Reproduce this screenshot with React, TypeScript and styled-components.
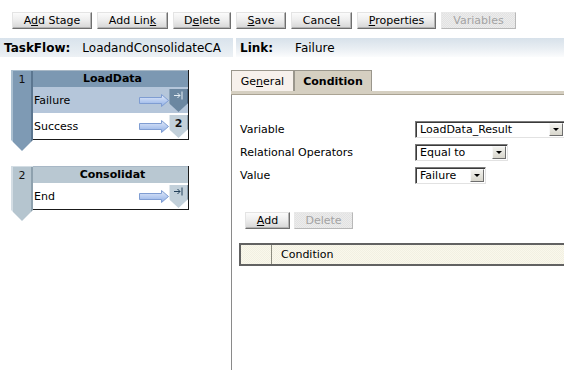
import React from "react";
import styled, { createGlobalStyle, css } from "styled-components";

const Global = createGlobalStyle`
  html, body { margin: 0; padding: 0; background: #ffffff; }
  body { font-family: "DejaVu Sans", Verdana, sans-serif; font-size: 11px; color: #000; }
  * { box-sizing: border-box; }
`;

const Page = styled.div`
  width: 564px;
  height: 370px;
  overflow: hidden;
  display: flex;
  flex-direction: column;
  background: #fff;
`;

const Toolbar = styled.div`
  display: flex;
  gap: 5px;
  padding: 12px 0 0 12px;
  height: 29px;
`;

const Btn = styled.button<{ $w: number; $disabled?: boolean }>`
  width: ${(p) => p.$w}px;
  height: 17px;
  padding: 0;
  margin: 0;
  font-family: "DejaVu Sans", Verdana, sans-serif;
  font-size: 11px;
  line-height: 14px;
  color: #000;
  background: linear-gradient(#fbfbfb, #eeeeee 45%, #d6d6d6);
  border: 1px solid;
  border-color: #e4e4e4 #6f6f6f #6f6f6f #e4e4e4;
  box-shadow: inset -1px -1px 0 #b4b4b4;
  ${(p) =>
    p.$disabled &&
    css`
      color: #a3a3a3;
      background: repeating-conic-gradient(#ececec 0 25%, #e2e2e2 0 50%) 0 0 / 2px 2px;
      border-color: #e8e8e8 #b8b8b8 #b8b8b8 #e8e8e8;
      box-shadow: none;
    `}
  u { text-decoration: underline; text-underline-offset: 1px; }
`;

const HeaderBar = styled.div`
  display: flex;
  gap: 3px;
  margin-top: 9px;
  height: 19px;
`;

const HeaderCell = styled.div<{ $w?: number; $fade?: boolean }>`
  ${(p) => (p.$w ? `width: ${p.$w}px; flex: none;` : "flex: 1;")}
  display: flex;
  align-items: center;
  padding-left: 4px;
  font-size: 12px;
  white-space: nowrap;
  overflow: hidden;
  background: ${(p) =>
    p.$fade
      ? "linear-gradient(#d7e1ea, #e9eef3 55%, #fbfcfd)"
      : "linear-gradient(#d9e3ec, #e4ebf1 60%, #edf1f5)"};
`;

const HeaderKey = styled.b<{ $gap: number }>`
  font-weight: bold;
  margin-right: ${(p) => p.$gap}px;
`;

const Main = styled.div`
  flex: 1;
  display: flex;
  margin-top: 13px;
  min-height: 0;
`;

const LeftPanel = styled.div`
  width: 231px;
  flex: none;
  padding-left: 11px;
  display: flex;
  flex-direction: column;
  gap: 15px;
`;

const Stage = styled.div`
  display: flex;
  align-items: stretch;
`;

const StageColumn = styled.div<{ $c: string; $l: string; $d: string }>`
  width: 22px;
  flex: none;
  clip-path: polygon(0 0, 100% 0, 100% calc(100% - 11px), 50% 100%, 0 calc(100% - 11px));
  background: linear-gradient(
    to right,
    ${(p) => p.$l} 0 2px,
    ${(p) => p.$c} 2px calc(100% - 2px),
    ${(p) => p.$d} calc(100% - 2px)
  );
  border-top: 1px solid ${(p) => p.$l};
  text-align: center;
  padding-top: 2px;
  font-size: 11px;
  color: #111;
`;

const StageBox = styled.div`
  width: 156px;
  margin-bottom: 11px;
  border-right: 1px solid #1a1a1a;
  border-bottom: 1px solid #1a1a1a;
  display: flex;
  flex-direction: column;
`;

const StageHead = styled.div<{ $bg: string }>`
  height: 17px;
  background: ${(p) => p.$bg};
  border-top: 1px solid #a8b8c6;
  font-weight: bold;
  font-size: 11px;
  text-align: center;
  line-height: 15px;
  padding-left: 4px;
`;

const StageRow = styled.div<{ $sel?: boolean }>`
  height: 26px;
  display: flex;
  align-items: flex-start;
  background: ${(p) => (p.$sel ? "#b5c6da" : "#ffffff")};
`;

const RowLabel = styled.span`
  align-self: center;
  padding-left: 1px;
  flex: 1;
`;

const ArrowIcon = styled.svg`
  align-self: center;
  margin-top: 1px;
`;

const Badge = styled.div<{ $dark?: boolean }>`
  width: 19px;
  height: 23px;
  margin-top: 2px;
  clip-path: polygon(0 0, 100% 0, 100% 62%, 50% 100%, 0 62%);
  background: ${(p) =>
    p.$dark
      ? "linear-gradient(to right, #8aa2b8 0 1px, #6b87a1 1px calc(100% - 1px), #4d6782 calc(100% - 1px))"
      : "linear-gradient(to right, #e2e9ee 0 1px, #c2d0da 1px calc(100% - 1px), #8fa2b1 calc(100% - 1px))"};
  display: flex;
  justify-content: center;
  padding-top: 2px;
  font-weight: bold;
  font-size: 11px;
  color: #111;
`;

const RightPanel = styled.div`
  flex: 1;
  min-width: 0;
  display: flex;
  flex-direction: column;
`;

const TabRow = styled.div`
  display: flex;
  height: 21px;
`;

const Tab = styled.div<{ $active?: boolean; $w: number }>`
  width: ${(p) => p.$w}px;
  height: 21px;
  border: 1px solid #9a968c;
  border-bottom: none;
  background: ${(p) => (p.$active ? "#d5cfc1" : "#f7f1ec")};
  font-weight: ${(p) => (p.$active ? "bold" : "normal")};
  font-size: 11px;
  display: flex;
  align-items: center;
  justify-content: center;
  u { text-underline-offset: 1px; }
`;

const TabBar = styled.div`
  height: 4px;
  background: #d5cfc1;
  border-bottom: 1px solid #aaa393;
`;

const Content = styled.div`
  flex: 1;
  border-left: 1px solid #8a8a8a;
  padding: 23px 0 0 0;
`;

const Form = styled.div`
  display: grid;
  grid-template-columns: 175px auto;
  grid-auto-rows: 23px;
  padding-left: 8px;
  align-items: center;
`;

const Label = styled.span`
  font-size: 11px;
`;

const Select = styled.div<{ $w: number }>`
  width: ${(p) => p.$w}px;
  height: 17px;
  background: #fff;
  border: 1px solid;
  border-color: #7a7a7a #e2e2e2 #e2e2e2 #7a7a7a;
  box-shadow: inset 1px 1px 0 #3a3a3a;
  display: flex;
  align-items: center;
  padding-left: 4px;
  font-size: 11px;
`;

const SelectText = styled.span`
  flex: 1;
  white-space: nowrap;
`;

const DropBtn = styled.span`
  width: 14px;
  height: 13px;
  margin-right: 1px;
  background: linear-gradient(#f2f2ee, #d8d6cc);
  border: 1px solid;
  border-color: #f8f8f8 #6e6e6e #6e6e6e #f8f8f8;
  display: flex;
  align-items: center;
  justify-content: center;
  &::after {
    content: "";
    border-left: 3px solid transparent;
    border-right: 3px solid transparent;
    border-top: 3px solid #000;
  }
`;

const ActionRow = styled.div`
  display: flex;
  gap: 4px;
  padding-left: 13px;
  margin-top: 25px;
`;

const Table = styled.div`
  margin: 14px 0 0 7px;
  width: 340px;
  height: 23px;
  border: 2px solid #626262;
  background: repeating-conic-gradient(#faf8ec 0 25%, #f2f0e2 0 50%) 0 0 / 2px 2px;
  display: flex;
`;

const TableCell = styled.div<{ $w?: number }>`
  ${(p) => (p.$w ? `width: ${p.$w}px; border-right: 1px solid #8c8c80;` : "flex: 1; padding-left: 9px;")}
  display: flex;
  align-items: center;
  font-size: 11px;
`;

const Arrow = () => (
  <ArrowIcon width="30" height="13" viewBox="0 0 30 13">
    <defs>
      <linearGradient id="ag" x1="0" y1="0" x2="0" y2="1">
        <stop offset="0" stopColor="#e4ecfa" />
        <stop offset="1" stopColor="#8eaee6" />
      </linearGradient>
    </defs>
    <path
      d="M0.5 3.5 H22.5 V0.5 L29.5 6.5 L22.5 12.5 V9.5 H0.5 Z"
      fill="url(#ag)"
      stroke="#7f9dd2"
      strokeWidth="1"
    />
  </ArrowIcon>
);

const EndGlyph = ({ color }: { color: string }) => (
  <svg width="9" height="9" viewBox="0 0 9 9">
    <path d="M0 4.5 H6 M3.5 2 L6 4.5 L3.5 7" stroke={color} strokeWidth="1" fill="none" />
    <path d="M8 0.5 V8.5" stroke={color} strokeWidth="1" />
  </svg>
);

type Row = { label: string; sel?: boolean; target: "end" | string };
type StageData = {
  num: string;
  name: string;
  head: string;
  col: { c: string; l: string; d: string };
  rows: Row[];
};

const stages: StageData[] = [
  {
    num: "1",
    name: "LoadData",
    head: "#7c98b2",
    col: { c: "#7e9ab4", l: "#aabfd0", d: "#5b7690" },
    rows: [
      { label: "Failure", sel: true, target: "end" },
      { label: "Success", target: "2" },
    ],
  },
  {
    num: "2",
    name: "Consolidat",
    head: "#b9c8d2",
    col: { c: "#b5c5cf", l: "#d3dde4", d: "#8ea1ae" },
    rows: [{ label: "End", target: "end" }],
  },
];

export default function App() {
  return (
    <>
      <Global />
      <Page>
        <Toolbar>
          <Btn $w={80}>A<u>d</u>d Stage</Btn>
          <Btn $w={71}>Add Lin<u>k</u></Btn>
          <Btn $w={58}>D<u>e</u>lete</Btn>
          <Btn $w={50}><u>S</u>ave</Btn>
          <Btn $w={61}>Cance<u>l</u></Btn>
          <Btn $w={79}><u>P</u>roperties</Btn>
          <Btn $w={75} $disabled>Variables</Btn>
        </Toolbar>
        <HeaderBar>
          <HeaderCell $w={233}>
            <HeaderKey $gap={12}>TaskFlow:</HeaderKey>
            LoadandConsolidateCA
          </HeaderCell>
          <HeaderCell $fade>
            <HeaderKey $gap={22}>Link:</HeaderKey>
            Failure
          </HeaderCell>
        </HeaderBar>
        <Main>
          <LeftPanel>
            {stages.map((s) => (
              <Stage key={s.num}>
                <StageColumn $c={s.col.c} $l={s.col.l} $d={s.col.d}>
                  {s.num}
                </StageColumn>
                <StageBox>
                  <StageHead $bg={s.head}>{s.name}</StageHead>
                  {s.rows.map((r) => (
                    <StageRow key={r.label} $sel={r.sel}>
                      <RowLabel>{r.label}</RowLabel>
                      <Arrow />
                      <Badge $dark={r.sel}>
                        {r.target === "end" ? (
                          <EndGlyph color={r.sel ? "#e6eef4" : "#23405a"} />
                        ) : (
                          r.target
                        )}
                      </Badge>
                    </StageRow>
                  ))}
                </StageBox>
              </Stage>
            ))}
          </LeftPanel>
          <RightPanel>
            <TabRow>
              <Tab $w={63}>
                Ge<u>n</u>eral
              </Tab>
              <Tab $w={78} $active>
                Condition
              </Tab>
            </TabRow>
            <TabBar />
            <Content>
              <Form>
                <Label>Variable</Label>
                <Select $w={150}>
                  <SelectText>LoadData_Result</SelectText>
                  <DropBtn />
                </Select>
                <Label>Relational Operators</Label>
                <Select $w={93}>
                  <SelectText>Equal to</SelectText>
                  <DropBtn />
                </Select>
                <Label>Value</Label>
                <Select $w={71}>
                  <SelectText>Failure</SelectText>
                  <DropBtn />
                </Select>
              </Form>
              <ActionRow>
                <Btn $w={45}><u>A</u>dd</Btn>
                <Btn $w={59} $disabled>Delete</Btn>
              </ActionRow>
              <Table>
                <TableCell $w={31} />
                <TableCell>Condition</TableCell>
              </Table>
            </Content>
          </RightPanel>
        </Main>
      </Page>
    </>
  );
}
